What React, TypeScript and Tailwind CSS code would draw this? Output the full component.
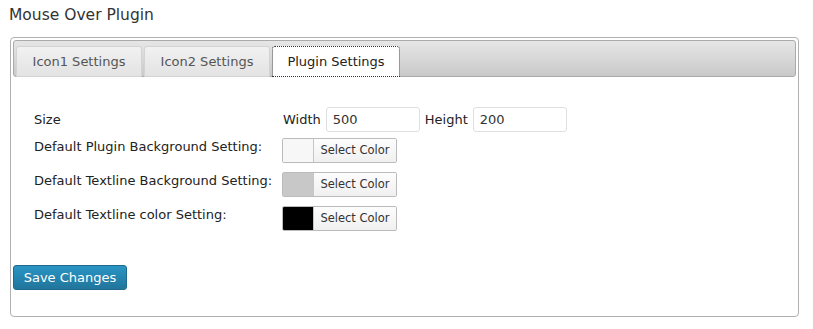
const font = { fontFamily: '"DejaVu Sans", Verdana, sans-serif' };

const tabs = [
  { label: "Icon1 Settings", width: "w-[126px]", active: false },
  { label: "Icon2 Settings", width: "w-[126px]", active: false },
  { label: "Plugin Settings", width: "w-[128px]", active: true },
];

const ColorPicker = ({ swatch }: { swatch: string }) => (
  <div className="flex h-[25px] w-[115px] border border-[#bbbbbb] rounded-[2px] overflow-hidden">
    <div className={`w-[31px] h-full border-r border-[#c6c6c6] ${swatch}`} />
    <div className="flex-1 flex items-center justify-center bg-gradient-to-b from-[#fdfdfd] to-[#f0f0f0] text-[11.5px] text-[#333]">
      Select Color
    </div>
  </div>
);

const SettingRow = ({ label, swatch }: { label: string; swatch: string }) => (
  <div className="flex h-[34px]">
    <div className="w-[248px] pt-[0px] text-[13px] text-[#222] leading-[18px]">{label}</div>
    <ColorPicker swatch={swatch} />
  </div>
);

export default function App() {
  return (
    <div className="w-[813px] h-[329px] bg-white" style={font}>
      <h2 className="pl-[9px] pt-[4px] h-[37px] text-[15.5px] text-[#333] leading-[22px]">Mouse Over Plugin</h2>

      <div className="ml-[10px] w-[789px] h-[280px] border border-[#b0b0b0] rounded-[4px] p-[2px] flex flex-col">
        <div className="h-[37px] border border-[#aaaaaa] rounded-[3px] bg-gradient-to-b from-[#e6e6e6] to-[#c9c9c9] flex items-end gap-[2px] pl-[2px]">
          {tabs.map((t) => (
            <div
              key={t.label}
              className={`${t.width} h-[31px] -mb-[1px] rounded-t-[3px] flex items-center justify-center text-[13px] ${
                t.active
                  ? "bg-white text-[#222] border border-dotted border-[#333]"
                  : "bg-gradient-to-b from-[#f1f1f1] to-[#e3e3e3] text-[#555] border border-[#d3d3d3]"
              }`}
            >
              {t.label}
            </div>
          ))}
        </div>

        <div className="pl-[21px] pt-[30px] flex flex-col">
          <div className="flex h-[31px] items-start">
            <div className="w-[248px] h-[25px] flex items-center text-[13px] text-[#222]">Size</div>
            <div className="flex items-center h-[25px] text-[13px] text-[#222]">
              <span className="ml-[1px] mr-[5px]">Width</span>
              <div className="w-[94px] h-[25px] border border-[#dfdfdf] rounded-[3px] px-[6px] flex items-center text-[#333]">500</div>
              <span className="ml-[5px] mr-[5px]">Height</span>
              <div className="w-[94px] h-[25px] border border-[#dfdfdf] rounded-[3px] px-[6px] flex items-center text-[#333]">200</div>
            </div>
          </div>
          <SettingRow label="Default Plugin Background Setting:" swatch="bg-[#f7f7f7]" />
          <SettingRow label="Default Textline Background Setting:" swatch="bg-[#c8c8c8]" />
          <SettingRow label="Default Textline color Setting:" swatch="bg-black" />
        </div>

        <div className="mt-[25px]">
          <button className="w-[114px] h-[25px] rounded-[3px] border border-[#1e6a8d] bg-gradient-to-b from-[#2a95c5] to-[#21759b] text-white text-[13px] leading-none">
            Save Changes
          </button>
        </div>
      </div>
    </div>
  );
}
